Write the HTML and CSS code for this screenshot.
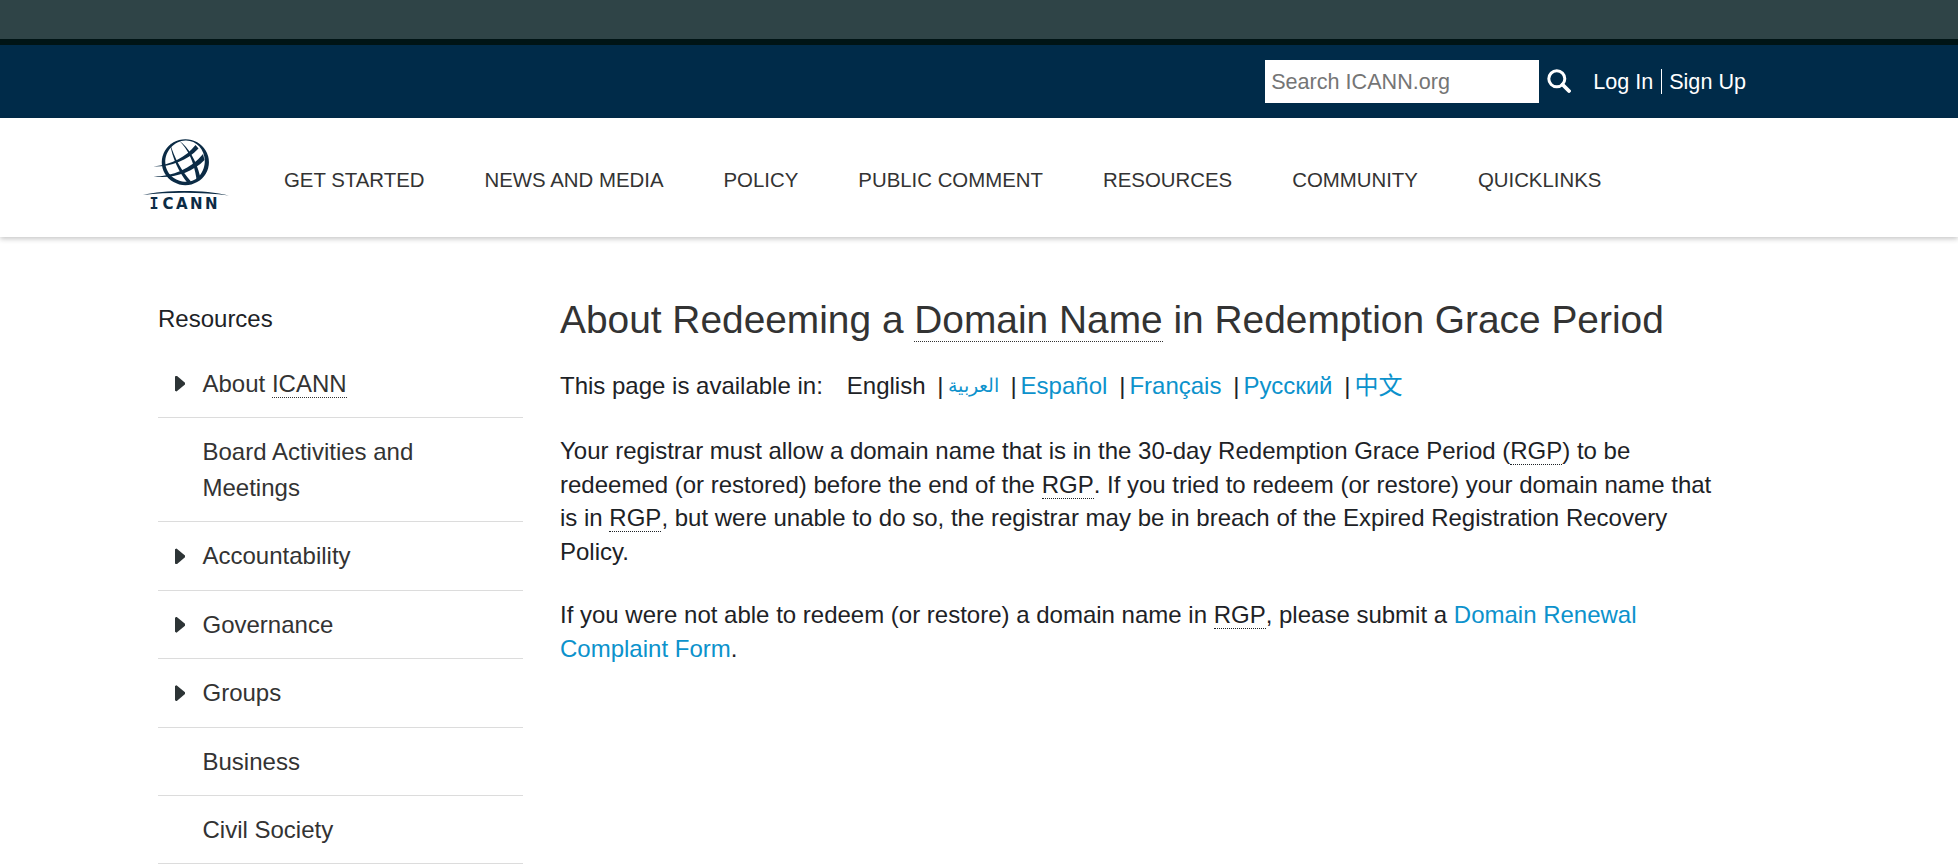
FILE: index.html
```
<!DOCTYPE html>
<html lang="en">
<head>
    <meta charset="UTF-8">
    <meta name="viewport" content="width=device-width, initial-scale=1.0">
    <title>About Redeeming a Domain Name in Redemption Grace Period - ICANN</title>
    <link rel="stylesheet" href="styles.css">
</head>
<body>
    <div class="browser-edge"></div>

    <div class="top-bar">
        <form class="search">
            <input type="text" class="search-input" placeholder="Search ICANN.org">
            <button type="button" class="search-btn" aria-label="Search">
                <svg width="24" height="24" viewBox="0 0 24 24">
                    <circle cx="9.8" cy="9.8" r="8" fill="none" stroke="#fff" stroke-width="3"/>
                    <path d="M15.5 15.5L22 22" stroke="#fff" stroke-width="3.8" stroke-linecap="round"/>
                </svg>
            </button>
        </form>
        <div class="account">
            <a href="#">Log In</a>
            <a href="#" class="sign-up">Sign Up</a>
        </div>
    </div>

    <header class="header">
        <a href="#" class="logo">
            <svg width="90" height="74" viewBox="12 18 90 74" fill="#0b2b45">
                <!-- globe -->
                <path fill-rule="evenodd" d="M55.3 19.2a23.6 23 0 1 0 .1 0zM55.5 20.4C66 20 74.5 29 74.8 40.5C75 52 67 61.8 57 61.8C45 62 35.6 53.5 35.3 42.5C35 31 44 20.8 55.5 20.4z"/>
                <path d="M40 23C42 38 49 52 57.5 63L61 61.5C52 51 44 38 40 23z"/>
                <path d="M49 20.5C58 29 64 42 66.5 59L70 56C66.5 41 59 28 49 20.5z"/>
                <path d="M23.5 46.6C40 47 57 41 68.5 28.5L65.5 25C56 37 42 44.5 23.5 46.6z"/>
                <path d="M23.5 56.5C42 59 62 53 74.5 40L73 34C61 48.5 43 56.5 23.5 56.5z"/>
                <!-- arc -->
                <path d="M13 75C35 69.8 74 69.5 99 75.5C72 71.8 38 72 13 75z"/>
                <text class="logo-serif" x="19.5" y="88.5">I</text>
                <text class="logo-text" x="32.5" y="88.5" textLength="55" lengthAdjust="spacing">CANN</text>
            </svg>
        </a>
        <nav class="nav">
            <a href="#">GET STARTED</a>
            <a href="#">NEWS AND MEDIA</a>
            <a href="#">POLICY</a>
            <a href="#">PUBLIC COMMENT</a>
            <a href="#">RESOURCES</a>
            <a href="#">COMMUNITY</a>
            <a href="#">QUICKLINKS</a>
        </nav>
    </header>

    <div class="page">
        <aside class="sidebar">
            <div class="sidebar-title">Resources</div>
            <ul class="side-list">
                <li class="has-children"><a href="#">About <abbr>ICANN</abbr></a></li>
                <li><a href="#">Board Activities and Meetings</a></li>
                <li class="has-children"><a href="#">Accountability</a></li>
                <li class="has-children"><a href="#">Governance</a></li>
                <li class="has-children"><a href="#">Groups</a></li>
                <li><a href="#">Business</a></li>
                <li><a href="#">Civil Society</a></li>
            </ul>
        </aside>

        <main class="content">
            <h1>About Redeeming a <abbr>Domain Name</abbr> in Redemption Grace Period</h1>
            <div class="languages">
                <span class="languages-label">This page is available in:</span>
                <ul class="language-list">
                    <li>English</li>
                    <li><a href="#" class="arabic" lang="ar">العربية</a></li>
                    <li><a href="#" lang="es">Español</a></li>
                    <li><a href="#" lang="fr">Français</a></li>
                    <li><a href="#" lang="ru">Русский</a></li>
                    <li><a href="#" lang="zh">中文</a></li>
                </ul>
            </div>
            <p>Your registrar must allow a domain name that is in the 30-day Redemption Grace Period (<abbr>RGP</abbr>) to be redeemed (or restored) before the end of the <abbr>RGP</abbr>. If you tried to redeem (or restore) your domain name that is in <abbr>RGP</abbr>, but were unable to do so, the registrar may be in breach of the Expired Registration Recovery Policy.</p>
            <p>If you were not able to redeem (or restore) a domain name in <abbr>RGP</abbr>, please submit a <a href="#">Domain Renewal Complaint Form</a>.</p>
        </main>
    </div>
</body>
</html>
```
FILE: styles.css
```
* {
    box-sizing: border-box;
}

body {
    margin: 0;
    height: 868px;
    overflow: hidden;
    background: #fff;
    color: #1d2226;
    font-family: "Liberation Sans", Arial, "Noto Sans CJK SC", sans-serif;
    font-size: 24px;
    line-height: 33.6px;
}

a {
    color: #0c92cc;
    text-decoration: none;
}

ul {
    list-style: none;
    margin: 0;
    padding: 0;
}

abbr {
    border-bottom: 1px dotted currentColor;
    font-kerning: none;
}

.browser-edge {
    height: 45px;
    background: #2f4447;
    border-bottom: 6px solid #001415;
}

.top-bar {
    display: flex;
    align-items: center;
    justify-content: flex-end;
    height: 73px;
    padding-right: 212px;
    background: #002b49;
    font-size: 21.6px;
}

.search {
    display: flex;
    align-items: center;
}

.search-input {
    width: 274px;
    height: 43px;
    padding: 0 6px;
    border: none;
    background: #fff;
    font-family: inherit;
    font-size: 21.6px;
}

.search-input::placeholder {
    color: #757575;
}

.search-btn {
    display: flex;
    margin: 0 0 2px 7.5px;
    padding: 0;
    border: none;
    background: none;
}

.account {
    display: flex;
    margin-left: 22.5px;
    line-height: 25px;
}

.account a {
    color: #fff;
}

.sign-up {
    margin-left: 8px;
    padding-left: 7px;
    border-left: 1px solid #fff;
}

.header {
    display: flex;
    align-items: center;
    height: 119px;
    padding-left: 142px;
    background: #fff;
    box-shadow: 0 2px 5px rgba(0, 0, 0, 0.22);
}

.logo {
    display: flex;
    margin-bottom: 5px;
}

.logo-text {
    font: bold 15px "DejaVu Sans", sans-serif;
}

.logo-serif {
    font: bold 15px "DejaVu Sans Mono", monospace;
}

.nav {
    display: flex;
    gap: 60px;
    margin: 6px 0 0 52px;
    font-size: 20.4px;
}

.nav a {
    color: #333;
}

.page {
    display: flex;
    padding: 62px 0 0 158px;
}

.sidebar {
    width: 365px;
    margin-right: 37px;
}

.sidebar-title {
    margin: 3px 0 14px;
}

.side-list {
    line-height: 36px;
}

.side-list li {
    position: relative;
    padding: 16px 60px 15.4px 44.5px;
    border-bottom: 1px solid #dcdcdc;
}

.side-list a {
    color: #333;
}

.has-children::before {
    content: "";
    position: absolute;
    left: 17px;
    top: 26px;
    width: 10px;
    height: 16px;
    background: #2d3436;
    clip-path: polygon(0 6%, 15% 0, 100% 44%, 100% 56%, 15% 100%, 0 94%);
}

.content {
    width: 1160px;
}

h1 {
    margin: 1px 0 29px;
    color: #333;
    font-size: 38.86px;
    font-weight: normal;
    line-height: 40px;
}

.languages {
    display: flex;
    height: 34px;
    margin-bottom: 31px;
}

.language-list {
    display: flex;
    margin-left: 24px;
}

.language-list li + li::before {
    content: "|";
    margin: 0 4px 0 11.8px;
}

.arabic {
    position: relative;
    top: -2px;
    font-size: 19px;
}

.content p {
    margin: 0 0 30px;
}
```
